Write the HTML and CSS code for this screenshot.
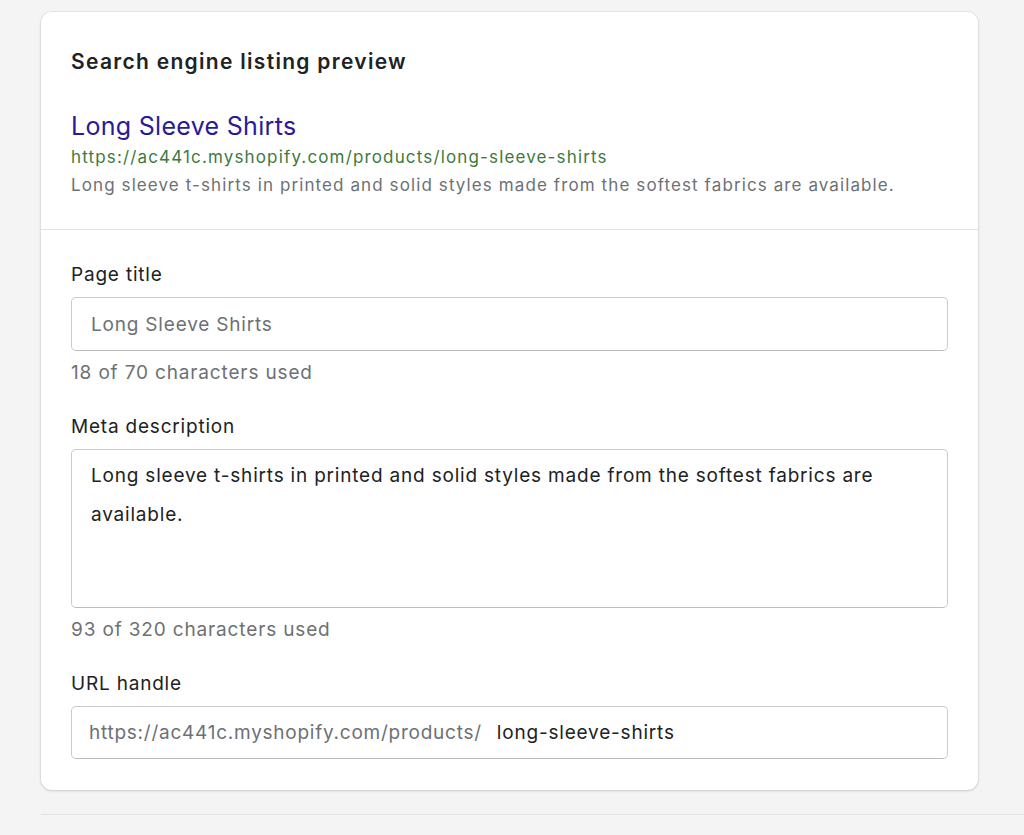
FILE: index.html
```html
<!DOCTYPE html>
<html>
<head>
<meta charset="utf-8">
<link rel="stylesheet" href="styles.css">
</head>
<body>
<main class="page">
  <section class="card">
    <div class="preview">
      <h2 class="card-title">Search engine listing preview</h2>
      <div class="serp">
        <div class="serp-title">Long Sleeve Shirts</div>
        <div class="serp-url">https://ac441c.myshopify.com/products/long-sleeve-shirts</div>
        <div class="serp-desc">Long sleeve t-shirts in printed and solid styles made from the softest fabrics are available.</div>
      </div>
    </div>
    <div class="form">
      <div class="field">
        <label class="label" for="title">Page title</label>
        <input class="input input-muted" id="title" type="text" value="Long Sleeve Shirts">
        <div class="help">18 of 70 characters used</div>
      </div>
      <div class="field">
        <label class="label" for="desc">Meta description</label>
        <textarea class="input textarea" id="desc">Long sleeve t-shirts in printed and solid styles made from the softest fabrics are available.</textarea>
        <div class="help">93 of 320 characters used</div>
      </div>
      <div class="field">
        <label class="label" for="handle">URL handle</label>
        <div class="input url-input">
          <span class="prefix">https://ac441c.myshopify.com/products/</span>
          <input class="handle" id="handle" type="text" value="long-sleeve-shirts">
        </div>
      </div>
    </div>
  </section>
  <hr class="page-rule">
</main>
</body>
</html>
```

FILE: styles.css
```css
* { box-sizing: border-box; }
html, body { margin: 0; padding: 0; }
body {
  background: #f4f4f5;
  font-family: Inter, "Noto Sans", "Liberation Sans", sans-serif;
  color: #202223;
  width: 1024px;
  height: 835px;
  overflow: hidden;
}
.page {
  padding: 12px 0 0 41px;
}
.card {
  width: 937px;
  background: #fff;
  border-radius: 11px;
  box-shadow: 0 0 0 1px rgba(63,63,68,0.05), 0 1px 3px rgba(63,63,68,0.18);
}
.preview {
  padding: 35px 30px 30px;
  border-bottom: 1px solid #e1e3e5;
}
.card-title {
  margin: 0;
  font-size: 21px;
  line-height: 30px;
  font-weight: 600;
  letter-spacing: 1.3px;
  color: #202223;
}
.serp { margin-top: 32px; }
.serp-title {
  font-size: 25px;
  line-height: 34px;
  letter-spacing: 0.3px;
  color: #2a1a96;
}
.serp-url {
  font-size: 17px;
  line-height: 28px;
  letter-spacing: 1.15px;
  color: #3d7a3f;
}
.serp-desc {
  font-size: 17px;
  line-height: 28px;
  letter-spacing: 1.1px;
  color: #6d7175;
}
.form {
  padding: 31px 30px 31px;
  display: flex;
  flex-direction: column;
  gap: 26px;
}
.field {
  display: flex;
  flex-direction: column;
  gap: 8px;
}
.label {
  font-size: 19px;
  line-height: 28px;
  letter-spacing: 0.8px;
  color: #202223;
}
.input {
  display: block;
  width: 877px;
  height: 54px;
  border: 1px solid #c9cccf;
  border-bottom-color: #b9bdc1;
  border-radius: 5px;
  background: #fff;
  font-family: inherit;
  font-size: 19px;
  letter-spacing: 0.8px;
  color: #202223;
  padding: 0 19px;
  margin: 0;
  outline: none;
}
.input-muted { color: #6d7175; }
.textarea {
  height: 159px;
  resize: none;
  line-height: 39px;
  padding: 6px 19px;
}
.help {
  font-size: 19px;
  line-height: 28px;
  letter-spacing: 0.85px;
  color: #6d7175;
}
.url-input {
  display: flex;
  align-items: center;
  height: 53px;
  padding: 0 0 0 17px;
}
.prefix {
  color: #6d7175;
  white-space: nowrap;
  font-size: 19px;
  letter-spacing: 0.75px;
}
.handle {
  flex: 1;
  border: 0;
  outline: none;
  font-family: inherit;
  font-size: 19px;
  letter-spacing: 0.8px;
  color: #202223;
  padding: 0 0 0 15px;
  background: transparent;
}
.page-rule {
  margin: 24px 0 0;
  border: 0;
  border-top: 1px solid #e1e3e5;
}
```
